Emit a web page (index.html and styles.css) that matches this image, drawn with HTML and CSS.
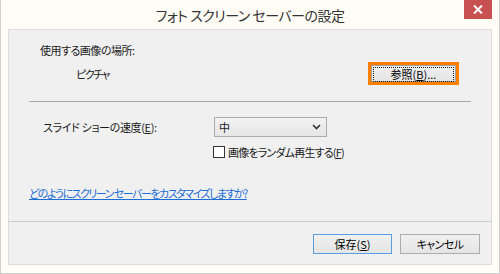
FILE: index.html
```html
<!DOCTYPE html>
<html lang="ja">
<head>
    <meta charset="UTF-8">
    <title>フォト スクリーン セーバーの設定</title>
    <link rel="stylesheet" href="styles.css">
</head>
<body>
    <div class="window">
        <div class="titlebar">
            <span class="title">フォト スクリーン セーバーの設定</span>
            <span class="close">
                <svg width="10" height="9" viewBox="0 0 10 9"><path d="M1 0.5 L9 8.5 M9 0.5 L1 8.5" stroke="#fff" stroke-width="2"/></svg>
            </span>
        </div>
        <div class="panel">
            <div class="content">
                <div class="place-label">使用する画像の場所:</div>
                <div class="place-row">
                    <span class="place-value">ピクチャ</span>
                    <button class="btn browse"><span class="focus">参照(<u>B</u>)...</span></button>
                </div>
                <div class="rule"></div>
                <div class="speed-row">
                    <label class="speed-label">スライド ショーの速度(<u>E</u>):</label>
                    <div class="select">
                        <span>中</span>
                        <svg width="9" height="6" viewBox="0 0 9 6"><path d="M1 1 L4.5 4.5 L8 1" fill="none" stroke="#333" stroke-width="1.6"/></svg>
                    </div>
                </div>
                <div class="check-row">
                    <span class="checkbox"></span>
                    <span class="check-label">画像をランダム再生する(<u>F</u>)</span>
                </div>
                <a class="help" href="#">どのようにスクリーン セーバーをカスタマイズしますか?</a>
            </div>
            <div class="footer">
                <button class="btn default">保存(<u>S</u>)</button>
                <button class="btn cancel">キャンセル</button>
            </div>
        </div>
    </div>
</body>
</html>
```

FILE: styles.css
```css
body {
    margin: 0;
    padding: 0;
    background-color: #fffdf6;
    font-family: "Noto Sans CJK JP", "Liberation Sans", sans-serif;
    font-feature-settings: "palt";
    font-size: 11px;
    color: #1a1a1a;
}
.window {
    width: 500px;
    height: 274px;
    box-sizing: border-box;
    border: 1px solid #cfcfcf;
    border-top: none;
    display: flex;
    flex-direction: column;
}
.titlebar {
    position: relative;
    height: 29px;
    display: flex;
    align-items: center;
    justify-content: center;
}
.title {
    font-size: 14px;
    letter-spacing: -0.5px;
    color: #333;
    margin-top: 1px;
}
.close {
    position: absolute;
    top: 0;
    right: 7px;
    width: 28px;
    height: 19px;
    background-color: #c75050;
    display: flex;
    align-items: center;
    justify-content: center;
}
.panel {
    flex: 1;
    margin: 0 7px 8px 7px;
    border: 1px solid #dcdcdc;
    background-color: #f0f0f0;
    display: flex;
    flex-direction: column;
}
.content {
    flex: 1;
    padding: 11px 20px 0 20px;
    display: flex;
    flex-direction: column;
    align-items: flex-start;
}
.place-label {
    margin-left: 11px;
    line-height: 18px;
    letter-spacing: -0.5px;
}
.place-row {
    align-self: stretch;
    margin-top: 3px;
    height: 23px;
    display: flex;
    align-items: center;
    justify-content: space-between;
}
.place-value {
    margin-left: 47px;
    letter-spacing: -1.5px;
}
.btn {
    font-family: inherit;
    font-feature-settings: "palt";
    font-size: 11px;
    color: #000;
    background: linear-gradient(#f0f0f0, #e5e5e5);
    border: 1px solid #acacac;
    padding: 0;
    height: 20px;
    width: 80px;
    line-height: 16px;
}
.browse {
    margin-right: 15px;
    width: 85px;
    height: 17px;
    padding: 1px;
    border-color: #a0a0a0;
    outline: 3px solid #ff7f00;
}
.browse .focus {
    display: block;
    height: 13px;
    line-height: 13px;
    border: 1px dotted #222;
}
.rule {
    align-self: stretch;
    margin-top: 16px;
    border-top: 1px solid #a9a9a9;
}
.speed-row {
    margin-top: 15px;
    height: 20px;
    display: flex;
    align-items: center;
}
.speed-label {
    margin-left: 14px;
    width: 171px;
    letter-spacing: -0.35px;
}
.select {
    box-sizing: border-box;
    width: 113px;
    height: 20px;
    padding: 0 5px 0 4px;
    border: 1px solid #acacac;
    background: linear-gradient(#f2f2f2, #e6e6e6);
    display: flex;
    align-items: center;
    justify-content: space-between;
}
.check-row {
    margin-top: 7px;
    margin-left: 184px;
    height: 16px;
    display: flex;
    align-items: center;
    gap: 3px;
}
.check-label {
    letter-spacing: -0.8px;
}
.checkbox {
    box-sizing: border-box;
    width: 12px;
    height: 12px;
    border: 1px solid #333;
    background-color: #fff;
}
.help {
    margin-top: 25px;
    line-height: 16px;
    color: #1c6ed6;
    letter-spacing: -1.5px;
}
.footer {
    height: 43px;
    border-top: 1px solid #cacaca;
    padding: 12px 11px 0 0;
    box-sizing: border-box;
    display: flex;
    justify-content: flex-end;
    align-items: flex-start;
    gap: 8px;
}
.default {
    border-color: #5a9ee0;
    width: 79px;
}
.cancel {
    letter-spacing: -0.6px;
}
```
